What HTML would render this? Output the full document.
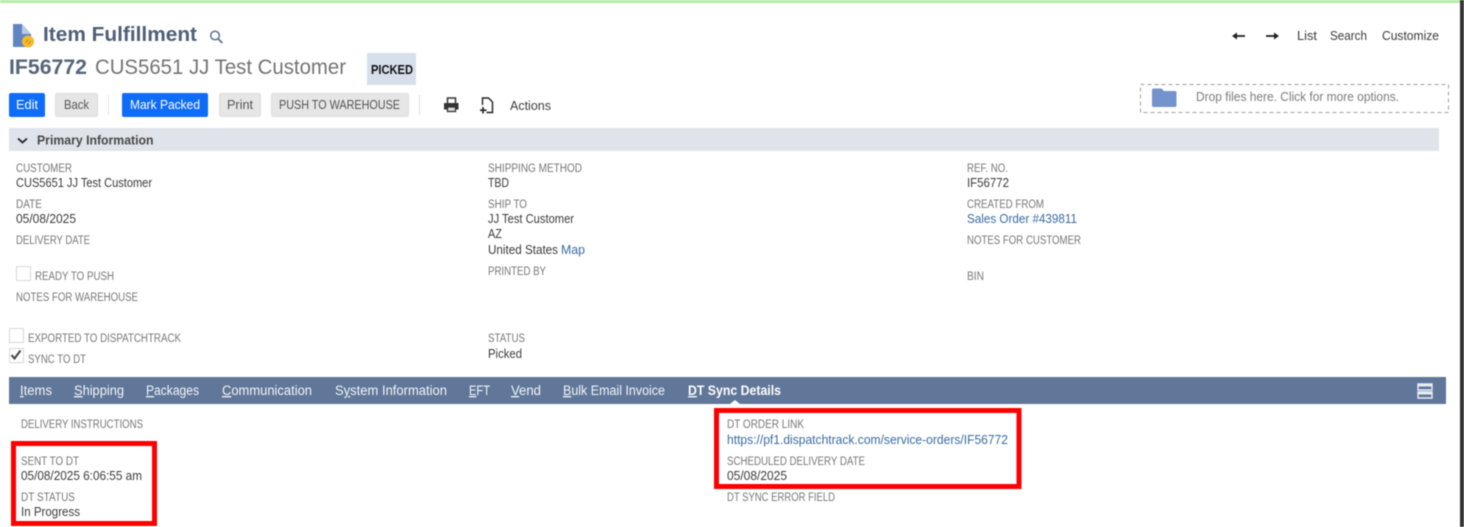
<!DOCTYPE html>
<html lang="en">
<head>
<meta charset="utf-8">
<title>Item Fulfillment</title>
<style>
html,body{margin:0;padding:0;width:1464px;height:527px;overflow:hidden;background:#fff}
svg{display:block;filter:blur(.5px)}
text{font-family:"Liberation Sans",sans-serif}
.l{font-size:11.5px;fill:#777}
.v{font-size:12.5px;fill:#3c3c3c}
.a{font-size:12.5px;fill:#3a6ba3}
.b{font-size:12.5px;fill:#fff;-webkit-text-stroke:.35px #fff}
.g{font-size:12.5px;fill:#555;-webkit-text-stroke:.35px #555}
.t{font-size:13.5px;fill:#f2f5f9}
.n{font-size:12.5px;fill:#3c3c3c;-webkit-text-stroke:.3px #3c3c3c}
</style>
</head>
<body>
<svg width="1464" height="527" viewBox="0 0 1464 527" xmlns="http://www.w3.org/2000/svg">
<rect width="1464" height="527" fill="#fff"/>
<rect x="0" y="0" width="1464" height="3" fill="#b4ecaa"/>
<rect x="1460" y="0" width="4" height="527" fill="#333"/>

<!-- title icon -->
<path d="M13 24h9l9 10v13H13z" fill="#6085c0"/>
<path d="M22 24l9 10h-9z" fill="#b9c9e2"/>
<circle cx="28" cy="41.500" r="6" fill="#f5b82e"/>
<path d="M26 42.500l2-3M28.500 44l2-3" stroke="#c48a14" stroke-width="1" fill="none"/>
<text x="43" y="41" font-size="20.500" font-weight="bold" fill="#4d5f79" textLength="154" lengthAdjust="spacingAndGlyphs">Item Fulfillment</text>
<circle cx="215" cy="35.500" r="4.300" fill="none" stroke="#5a7299" stroke-width="1.500"/>
<path d="M218.300 39l4 4" stroke="#5a7299" stroke-width="1.800"/>

<text x="9" y="74" font-size="21.500" font-weight="bold" fill="#566578" textLength="78" lengthAdjust="spacingAndGlyphs">IF56772</text>
<text x="95" y="74" font-size="21.500" fill="#747474" textLength="251" lengthAdjust="spacingAndGlyphs">CUS5651 JJ Test Customer</text>
<rect x="367" y="53" width="49" height="32" fill="#d5e0ec"/>
<text x="371" y="74" font-size="12.500" font-weight="bold" fill="#111" textLength="42" lengthAdjust="spacingAndGlyphs">PICKED</text>

<!-- nav -->
<path d="M1245 36h-10" stroke="#222" stroke-width="1.800"/><path d="M1232 36l5-3.500v7z" fill="#222"/>
<path d="M1266 36h10" stroke="#222" stroke-width="1.800"/><path d="M1279 36l-5-3.500v7z" fill="#222"/>
<text class="n" x="1297" y="40" textLength="20" lengthAdjust="spacingAndGlyphs">List</text>
<text class="n" x="1330" y="40" textLength="37" lengthAdjust="spacingAndGlyphs">Search</text>
<text class="n" x="1382" y="40" textLength="57" lengthAdjust="spacingAndGlyphs">Customize</text>

<!-- dropzone -->
<rect x="1140.500" y="84.500" width="308" height="28" fill="none" stroke="#a0a0a0" stroke-dasharray="4 3"/>
<path d="M1152 90q0-1.500 1.500-1.500h8l2.500 2.500h11q1.500 0 1.500 1.500v13q0 1.500-1.500 1.500h-21.500q-1.500 0-1.500-1.500z" fill="#7393cc"/>
<text x="1196" y="101" font-size="12.500" fill="#7c7c7c" textLength="203" lengthAdjust="spacingAndGlyphs">Drop files here. Click for more options.</text>

<!-- buttons -->
<rect x="9" y="93" width="36" height="24" rx="2" fill="#0f6cf7"/>
<text class="b" x="16" y="109" textLength="22" lengthAdjust="spacingAndGlyphs">Edit</text>
<rect x="55.500" y="93.500" width="42" height="23" rx="2" fill="#e6e6e6" stroke="#ddd"/>
<text class="g" x="64" y="109" textLength="25" lengthAdjust="spacingAndGlyphs">Back</text>
<rect x="108" y="95" width="1" height="20" fill="#e3e3e3"/>
<rect x="122" y="93" width="86" height="24" rx="2" fill="#0f6cf7"/>
<text class="b" x="130" y="109" textLength="70" lengthAdjust="spacingAndGlyphs">Mark Packed</text>
<rect x="219.500" y="93.500" width="41" height="23" rx="2" fill="#e6e6e6" stroke="#ddd"/>
<text class="g" x="227" y="109" textLength="26" lengthAdjust="spacingAndGlyphs">Print</text>
<rect x="271.500" y="93.500" width="137" height="23" rx="2" fill="#e6e6e6" stroke="#ddd"/>
<text class="g" x="279" y="109" textLength="121" lengthAdjust="spacingAndGlyphs">PUSH TO WAREHOUSE</text>
<rect x="419" y="95" width="1" height="20" fill="#dcdcdc"/>
<!-- print icon -->
<path d="M447.500 103v-5h8v5" fill="none" stroke="#333" stroke-width="1.500"/>
<path d="M444 103h14.500v6.500H444z" fill="#333"/>
<rect x="447.500" y="107" width="8" height="4.500" fill="#ddd" stroke="#333" stroke-width="1.300"/>
<!-- add doc icon -->
<path d="M482.500 105v-7h6l4 4v10.500h-6" fill="none" stroke="#222" stroke-width="1.400"/>
<path d="M483 107v6.500M480 110.200h6.500" stroke="#222" stroke-width="1.600"/>
<text class="n" x="510" y="110" textLength="41" lengthAdjust="spacingAndGlyphs">Actions</text>

<!-- section bar -->
<rect x="9" y="128" width="1430" height="23" fill="#dfe3ea"/>
<path d="M18 138.500l4.500 4 4.500-4" fill="none" stroke="#222" stroke-width="1.800"/>
<text x="37" y="144.500" font-size="12.500" font-weight="bold" fill="#484848" textLength="116.500" lengthAdjust="spacingAndGlyphs">Primary Information</text>

<!-- column 1 -->
<text class="l" x="16" y="172" textLength="56" lengthAdjust="spacingAndGlyphs">CUSTOMER</text>
<text class="v" x="16" y="187" textLength="136" lengthAdjust="spacingAndGlyphs">CUS5651 JJ Test Customer</text>
<text class="l" x="16" y="208" textLength="26" lengthAdjust="spacingAndGlyphs">DATE</text>
<text class="v" x="16" y="223" textLength="60" lengthAdjust="spacingAndGlyphs">05/08/2025</text>
<text class="l" x="16" y="244" textLength="74" lengthAdjust="spacingAndGlyphs">DELIVERY DATE</text>
<rect x="16.500" y="266.500" width="14" height="14" fill="#fff" stroke="#d8d8d8"/>
<text class="l" x="35" y="280" textLength="79" lengthAdjust="spacingAndGlyphs">READY TO PUSH</text>
<text class="l" x="16" y="301" textLength="122" lengthAdjust="spacingAndGlyphs">NOTES FOR WAREHOUSE</text>
<rect x="9.500" y="328.500" width="14" height="14" fill="#fff" stroke="#d8d8d8"/>
<text class="l" x="28" y="342" textLength="153" lengthAdjust="spacingAndGlyphs">EXPORTED TO DISPATCHTRACK</text>
<rect x="9.500" y="348.500" width="14" height="14" fill="#fff" stroke="#d8d8d8"/>
<path d="M11.500 355l3 3.500 6-8" fill="none" stroke="#444" stroke-width="2"/>
<text class="l" x="28" y="363" textLength="58" lengthAdjust="spacingAndGlyphs">SYNC TO DT</text>

<!-- column 2 -->
<text class="l" x="488" y="172" textLength="94" lengthAdjust="spacingAndGlyphs">SHIPPING METHOD</text>
<text class="v" x="488" y="187" textLength="21" lengthAdjust="spacingAndGlyphs">TBD</text>
<text class="l" x="488" y="208" textLength="39" lengthAdjust="spacingAndGlyphs">SHIP TO</text>
<text class="v" x="488" y="223" textLength="86" lengthAdjust="spacingAndGlyphs">JJ Test Customer</text>
<text class="v" x="488" y="238" textLength="14" lengthAdjust="spacingAndGlyphs">AZ</text>
<text class="v" x="488" y="254" textLength="70" lengthAdjust="spacingAndGlyphs">United States</text>
<text class="a" x="561" y="254" textLength="24" lengthAdjust="spacingAndGlyphs">Map</text>
<text class="l" x="488" y="275" textLength="58" lengthAdjust="spacingAndGlyphs">PRINTED BY</text>
<text class="l" x="488" y="342" textLength="37" lengthAdjust="spacingAndGlyphs">STATUS</text>
<text class="v" x="488" y="358" textLength="34" lengthAdjust="spacingAndGlyphs">Picked</text>

<!-- column 3 -->
<text class="l" x="967" y="172" textLength="41" lengthAdjust="spacingAndGlyphs">REF. NO.</text>
<text class="v" x="967" y="187" textLength="42" lengthAdjust="spacingAndGlyphs">IF56772</text>
<text class="l" x="967" y="208" textLength="77" lengthAdjust="spacingAndGlyphs">CREATED FROM</text>
<text class="a" x="967" y="223" textLength="110" lengthAdjust="spacingAndGlyphs">Sales Order #439811</text>
<text class="l" x="967" y="244" textLength="114" lengthAdjust="spacingAndGlyphs">NOTES FOR CUSTOMER</text>
<text class="l" x="967" y="280" textLength="17" lengthAdjust="spacingAndGlyphs">BIN</text>

<!-- tabs -->
<rect x="9" y="377" width="1437" height="27" fill="#607799"/>
<path d="M730 404l5-4 5 4z" fill="#fff"/>
<text class="t" x="20" y="395" textLength="32" lengthAdjust="spacingAndGlyphs"><tspan text-decoration="underline">I</tspan>tems</text>
<text class="t" x="74" y="395" textLength="50" lengthAdjust="spacingAndGlyphs"><tspan text-decoration="underline">S</tspan>hipping</text>
<text class="t" x="146" y="395" textLength="53" lengthAdjust="spacingAndGlyphs"><tspan text-decoration="underline">P</tspan>ackages</text>
<text class="t" x="222" y="395" textLength="90" lengthAdjust="spacingAndGlyphs"><tspan text-decoration="underline">C</tspan>ommunication</text>
<text class="t" x="335" y="395" textLength="112" lengthAdjust="spacingAndGlyphs">S<tspan text-decoration="underline">y</tspan>stem Information</text>
<text class="t" x="469" y="395" textLength="21" lengthAdjust="spacingAndGlyphs"><tspan text-decoration="underline">E</tspan>FT</text>
<text class="t" x="511" y="395" textLength="30" lengthAdjust="spacingAndGlyphs"><tspan text-decoration="underline">V</tspan>end</text>
<text class="t" x="563" y="395" textLength="102" lengthAdjust="spacingAndGlyphs"><tspan text-decoration="underline">B</tspan>ulk Email Invoice</text>
<text class="t" x="688" y="395" textLength="93" lengthAdjust="spacingAndGlyphs" style="font-weight:bold;fill:#fff"><tspan text-decoration="underline">D</tspan>T Sync Details</text>
<path d="M1418 384h14v6h-14zM1418 392h14v6h-14z" fill="#607799" stroke="#e8edf3" stroke-width="1.400"/>
<rect x="1418" y="384" width="14" height="2.500" fill="#e8edf3"/>
<rect x="1418" y="392" width="14" height="2.500" fill="#e8edf3"/>

<!-- tab content -->
<text class="l" x="21" y="428" textLength="122" lengthAdjust="spacingAndGlyphs">DELIVERY INSTRUCTIONS</text>
<text class="l" x="21" y="465" textLength="58" lengthAdjust="spacingAndGlyphs">SENT TO DT</text>
<text class="v" x="21" y="480" textLength="121" lengthAdjust="spacingAndGlyphs">05/08/2025 6:06:55 am</text>
<text class="l" x="21" y="501" textLength="54" lengthAdjust="spacingAndGlyphs">DT STATUS</text>
<text class="v" x="21" y="516" textLength="59" lengthAdjust="spacingAndGlyphs">In Progress</text>
<text class="l" x="727" y="428" textLength="77" lengthAdjust="spacingAndGlyphs">DT ORDER LINK</text>
<text class="a" x="727" y="444" textLength="281" lengthAdjust="spacingAndGlyphs">https://pf1.dispatchtrack.com/service-orders/IF56772</text>
<text class="l" x="727" y="465" textLength="138" lengthAdjust="spacingAndGlyphs">SCHEDULED DELIVERY DATE</text>
<text class="v" x="727" y="480" textLength="60" lengthAdjust="spacingAndGlyphs">05/08/2025</text>
<text class="l" x="727" y="501" textLength="108" lengthAdjust="spacingAndGlyphs">DT SYNC ERROR FIELD</text>

<!-- red boxes -->
<rect x="13.500" y="443.500" width="141" height="80" fill="none" stroke="#fe0000" stroke-width="5"/>
<rect x="716.500" y="410.500" width="302.500" height="76" fill="none" stroke="#fe0000" stroke-width="5"/>
</svg>
</body>
</html>
